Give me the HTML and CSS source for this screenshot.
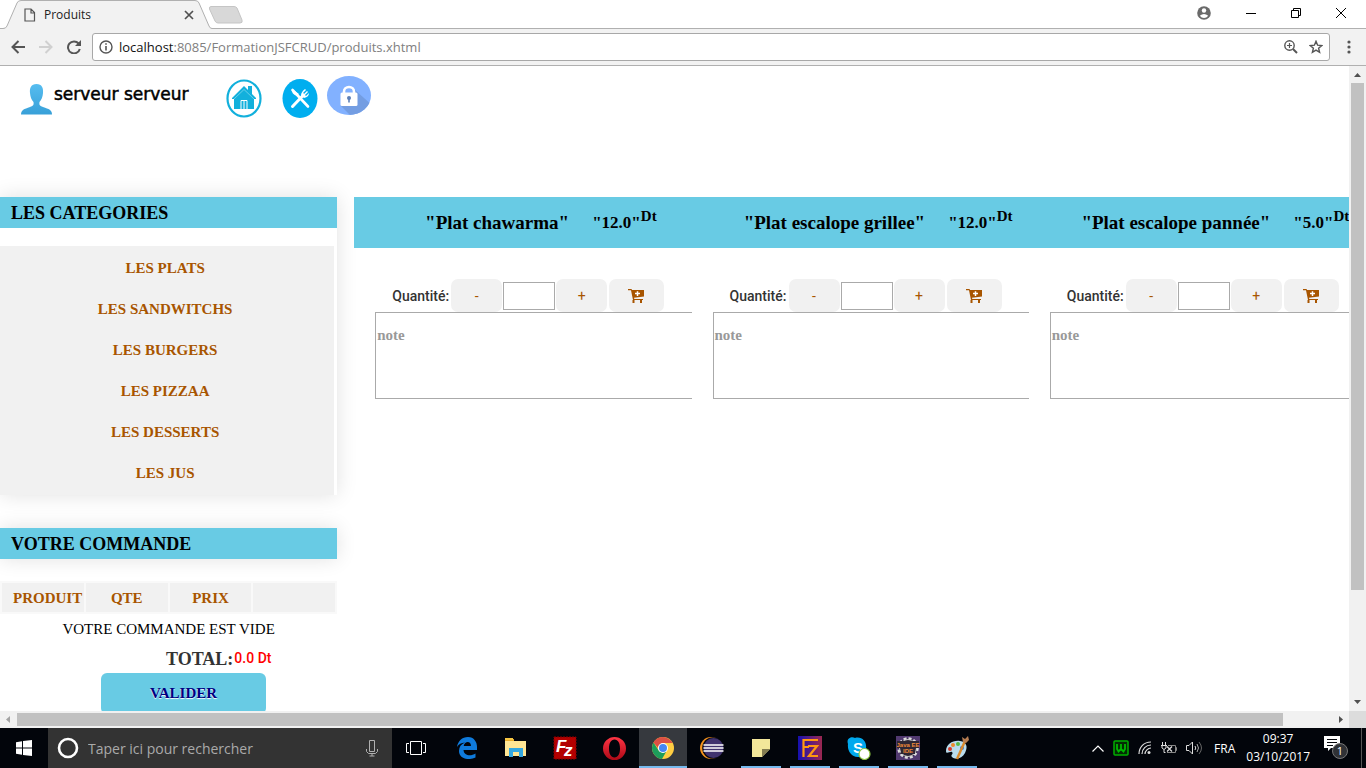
FILE: index.html
```html
<!DOCTYPE html>
<html lang="fr">
<head>
<meta charset="utf-8">
<title>Produits</title>
<link rel="stylesheet" href="styles.css">
</head>
<body>
<div class="tabstrip">
  <div class="tab">
    <svg class="tab-shape" width="212" height="29" viewBox="0 0 212 29"><path d="M0 28.500H3Q6 28.500 7 26L17 3Q18 .5 21 .5H195Q198 .5 199 3L209 26Q210 28.500 212 28.500V29H0Z" fill="#f2f2f2"/><path d="M0 28.500H3Q6 28.500 7 26L17 3Q18 .5 21 .5H195Q198 .5 199 3L209 26Q210 28.500 212 28.500" fill="none" stroke="#b0b0b0"/></svg>
    <div class="tab-body">
      <svg width="12" height="14" viewBox="0 0 12 14" fill="none" stroke="#555" stroke-width="1.200"><path d="M1 1H7L10.500 4.500V13H1ZM7 1V5H10.500"/></svg>
      <span class="tab-title">Produits</span>
      <button class="plain" aria-label="Fermer l'onglet"><svg width="10" height="10" viewBox="0 0 10 10" stroke="#505050" stroke-width="1.700"><path d="M1 1L9 9M9 1L1 9"/></svg></button>
    </div>
  </div>
  <button class="plain newtab" aria-label="Nouvel onglet"><svg width="36" height="18" viewBox="0 0 36 18"><path d="M3 .5H26Q28 .5 29 2L34 14Q35 17 32 17H10Q8 17 7 15L1.500 3Q1 .5 3 .5Z" fill="#d8d8d8" stroke="#c5c5c5"/></svg></button>
  <div class="window-controls">
    <button class="plain" aria-label="Profil"><svg width="14" height="14" viewBox="0 0 14 14"><circle cx="7" cy="7" r="6.800" fill="#6a6a6a"/><circle cx="7" cy="4.500" r="2.200" fill="#fff"/><path d="M2.800 9.800Q7 6.300 11.200 9.800Q9.500 12 7 12T2.800 9.800" fill="#fff"/></svg></button>
    <button class="plain" aria-label="Réduire"><svg width="10" height="10" viewBox="0 0 10 10"><path d="M0 5.500H10" stroke="#000"/></svg></button>
    <button class="plain" aria-label="Restaurer"><svg width="10" height="10" viewBox="0 0 10 10" fill="none" stroke="#000"><path d="M.5 2.500H7.500V9.500H.5ZM2.500 2.500V.5H9.500V7.500H7.500"/></svg></button>
    <button class="plain" aria-label="Fermer"><svg width="10" height="10" viewBox="0 0 10 10" stroke="#000"><path d="M0 0L10 10M10 0L0 10"/></svg></button>
  </div>
</div>
<div class="toolbar">
  <button class="plain tool" aria-label="Précédent"><svg width="14" height="14" viewBox="0 0 14 14" fill="none" stroke="#555" stroke-width="2"><path d="M14 7H1.500M7.500 1L1.500 7L7.500 13"/></svg></button>
  <button class="plain tool" aria-label="Suivant"><svg width="14" height="14" viewBox="0 0 14 14" fill="none" stroke="#d0d0d0" stroke-width="2"><path d="M0 7H12.500M6.500 1L12.500 7L6.500 13"/></svg></button>
  <button class="plain tool" aria-label="Actualiser"><svg width="14" height="14" viewBox="0 0 14 14"><path d="M11.600 3.500A6 6 0 1 0 12.800 9" fill="none" stroke="#555" stroke-width="2"/><path d="M14 0V6H8Z" fill="#555"/></svg></button>
  <div class="address">
    <svg width="14" height="14" viewBox="0 0 14 14"><circle cx="7" cy="7" r="6" fill="none" stroke="#555" stroke-width="1.400"/><path d="M7 6V10.500M7 3.200V4.800" stroke="#555" stroke-width="1.600"/></svg>
    <label for="url">localhost</label><input id="url" type="text" value=":8085/FormationJSFCRUD/produits.xhtml">
    <button class="plain" aria-label="Zoom"><svg width="14" height="14" viewBox="0 0 14 14" fill="none" stroke="#555"><circle cx="5.500" cy="5.500" r="4.700" stroke-width="1.400"/><path d="M9 9L13 13" stroke-width="2"/><path d="M3 5.500H8M5.500 3V8" stroke-width="1.200"/></svg></button>
    <button class="plain star" aria-label="Favori"><svg width="14" height="14" viewBox="0 0 14 14" fill="none" stroke="#555" stroke-width="1.400"><path d="M7 1.300L8.600 5.200L12.800 5.500L9.600 8.200L10.600 12.300L7 10.100L3.400 12.300L4.400 8.200L1.200 5.500L5.400 5.200Z"/></svg></button>
  </div>
  <button class="plain menu" aria-label="Menu"><svg width="4" height="14" viewBox="0 0 4 14" fill="#555"><circle cx="2" cy="2" r="1.600"/><circle cx="2" cy="7" r="1.600"/><circle cx="2" cy="12" r="1.600"/></svg></button>
</div>

<div class="viewport">
  <div class="page">
    <header class="site-header">
      <svg class="user-icon" width="31" height="31" viewBox="0 0 31 31"><defs><linearGradient id="user" x2="0" y2="1"><stop stop-color="#56bdf0"/><stop offset="1" stop-color="#38a0d8"/></linearGradient></defs><path fill="url(#user)" d="M15.500 0C10 0 8.500 4 9 9C9.300 13 10.500 16 12.500 18C13 21 12 22 9 23C3 25 0 26 0 30.500H31C31 26 28 25 22 23C19 22 18 21 18.500 18C20.500 16 21.700 13 22 9C22.500 4 21 0 15.500 0Z"/></svg>
      <span class="user-name">serveur serveur</span>
      <nav class="header-nav">
        <a class="nav-home" href="#accueil" aria-label="Accueil"><svg width="36" height="39" viewBox="0 0 36 39"><ellipse cx="18" cy="19.500" rx="16.500" ry="18" fill="#fff" stroke="#12b0dc" stroke-width="2.200"/><path fill="#12b0dc" d="M6 19L18 7L22 11V7H26V15L30 19V20H28V30H8V20H6Z"/><path d="M15 30V21.500H21V30M18 22V30" fill="none" stroke="#fff" stroke-width="1"/><path d="M8 20L18 10.500L28 20" fill="none" stroke="#8adcf0" stroke-width=".7"/></svg></a>
        <a class="nav-food" href="#plats" aria-label="Plats"><svg width="36" height="39" viewBox="0 0 36 39"><ellipse cx="18" cy="19.500" rx="17.500" ry="19.500" fill="#00aeef"/><path d="M10.500 11L26 27.500" stroke="#fff" stroke-width="2.600" stroke-linecap="round"/><path d="M10 10Q9 15 15 17L17 15Z" fill="#fff"/><path d="M10.500 27.500L21.500 16" stroke="#fff" stroke-width="3" stroke-linecap="round"/><path d="M19 16.500Q19 13 23 10L24 11L21 14L22 15L25 12L26 13L23 16L24 17L27 14Q27 18 22 19Z" fill="#fff"/></svg></a>
        <a class="nav-lock" href="#deconnexion" aria-label="Déconnexion"><svg width="44" height="40" viewBox="0 0 44 40"><defs><clipPath id="oval"><ellipse cx="22" cy="19.500" rx="22" ry="19.500"/></clipPath></defs><g clip-path="url(#oval)"><path fill="#82b1ff" d="M0 0H44V40H0Z"/><path fill="#739de2" d="M28 14L46 30V42H26L14 30Z"/></g><path d="M17 17V15.500A5 4.500 0 0 1 27 15.500V17" fill="none" stroke="#fff" stroke-width="2.600"/><rect x="13.500" y="16.500" width="17" height="13.500" rx="1.500" fill="#fff"/><path d="M22 21V26.500" stroke="#5b7fb8" stroke-width="1.600"/><circle cx="22" cy="22" r="2" fill="#5b7fb8"/></svg></a>
      </nav>
    </header>
    <div class="columns">
      <aside class="sidebar">
        <section class="panel">
          <h2 class="panel-title">LES CATEGORIES</h2>
          <nav class="categories">
            <a href="#plats">LES PLATS</a>
            <a href="#sandwitchs">LES SANDWITCHS</a>
            <a href="#burgers">LES BURGERS</a>
            <a href="#pizzaa">LES PIZZAA</a>
            <a href="#desserts">LES DESSERTS</a>
            <a href="#jus">LES JUS</a>
          </nav>
        </section>
        <section class="order">
          <h2 class="panel-title order-title">VOTRE COMMANDE</h2>
          <table class="order-table">
            <thead><tr><th class="first">PRODUIT</th><th>QTE</th><th>PRIX</th><th></th></tr></thead>
          </table>
          <p class="empty">VOTRE COMMANDE EST VIDE</p>
          <p class="total"><span class="total-label">TOTAL:</span><span class="total-value">0.0 Dt</span></p>
          <button class="validate">VALIDER</button>
        </section>
      </aside>
      <main class="products">
        <article class="product">
          <h3 class="product-title"><span>"Plat chawarma"</span><span class="price">"12.0"<sup>Dt</sup></span></h3>
          <div class="quantity"><label for="q1">Quantité:</label><button class="step">-</button><input id="q1" type="text"><button class="step">+</button><button class="cart" aria-label="Ajouter au panier"><svg width="17" height="14" viewBox="0 0 17 14"><path fill="#a85500" d="M0 0H3.500L4 1H16V7.500L6 8.700L6.300 10H15V11H5L3 1.300H0ZM4.500 11H6.500V14H4.500ZM12 11H14V14H12Z"/><path d="M9.500 2.200V7M7 4.600H12" stroke="#fff" stroke-width="1.500"/></svg></button></div>
          <textarea class="note" placeholder="note" aria-label="note"></textarea>
        </article>
        <article class="product">
          <h3 class="product-title"><span>"Plat escalope grillee"</span><span class="price">"12.0"<sup>Dt</sup></span></h3>
          <div class="quantity"><label for="q2">Quantité:</label><button class="step">-</button><input id="q2" type="text"><button class="step">+</button><button class="cart" aria-label="Ajouter au panier"><svg width="17" height="14" viewBox="0 0 17 14"><path fill="#a85500" d="M0 0H3.500L4 1H16V7.500L6 8.700L6.300 10H15V11H5L3 1.300H0ZM4.500 11H6.500V14H4.500ZM12 11H14V14H12Z"/><path d="M9.500 2.200V7M7 4.600H12" stroke="#fff" stroke-width="1.500"/></svg></button></div>
          <textarea class="note" placeholder="note" aria-label="note"></textarea>
        </article>
        <article class="product">
          <h3 class="product-title"><span>"Plat escalope pannée"</span><span class="price">"5.0"<sup>Dt</sup></span></h3>
          <div class="quantity"><label for="q3">Quantité:</label><button class="step">-</button><input id="q3" type="text"><button class="step">+</button><button class="cart" aria-label="Ajouter au panier"><svg width="17" height="14" viewBox="0 0 17 14"><path fill="#a85500" d="M0 0H3.500L4 1H16V7.500L6 8.700L6.300 10H15V11H5L3 1.300H0ZM4.500 11H6.500V14H4.500ZM12 11H14V14H12Z"/><path d="M9.500 2.200V7M7 4.600H12" stroke="#fff" stroke-width="1.500"/></svg></button></div>
          <textarea class="note" placeholder="note" aria-label="note"></textarea>
        </article>
      </main>
    </div>
  </div>
  <div class="vbar">
    <svg width="17" height="17" viewBox="0 0 17 17"><path fill="#505050" d="M5 11L8.500 7L12 11Z"/></svg>
    <div class="vtrack"><div class="vthumb"></div></div>
    <svg width="17" height="17" viewBox="0 0 17 17"><path fill="#505050" d="M5 6L8.500 10L12 6Z"/></svg>
  </div>
  <div class="hbar">
    <svg width="17" height="17" viewBox="0 0 17 17"><path fill="#a3a3a3" d="M10 5L6 8.500L10 12Z"/></svg>
    <div class="htrack"><div class="hthumb"></div></div>
    <svg width="17" height="17" viewBox="0 0 17 17"><path fill="#505050" d="M7 5L11 8.500L7 12Z"/></svg>
  </div>
  <div class="corner"></div>
</div>

<div class="taskbar">
  <button class="plain start" aria-label="Démarrer"><svg width="16" height="16" viewBox="0 0 16 16" fill="#fff"><path d="M0 2.200L6 1.300V7.500H0ZM7 1.100L16 0V7.500H7ZM0 8.500H6V14.700L0 13.800ZM7 8.500H16V16L7 14.900Z"/></svg></button>
  <div class="search">
    <svg width="22" height="22" viewBox="0 0 22 22"><circle cx="11" cy="11" r="9" fill="none" stroke="#fff" stroke-width="2.600"/></svg>
    <input type="text" placeholder="Taper ici pour rechercher" aria-label="Taper ici pour rechercher">
    <svg width="12" height="17" viewBox="0 0 12 17" fill="none" stroke="#b0b0b0"><path d="M3.500 .5H8.500V11.500H3.500ZM.5 9V11.500L2.500 13.500H9.500L11.500 11.500V9M6 13.500V16M3.500 16H8.500"/></svg>
  </div>
  <div class="apps">
    <button class="plain app" aria-label="Vue des tâches"><svg width="20" height="14" viewBox="0 0 20 14" fill="none" stroke="#fff"><path d="M4.500 .5H15.500V13.500H4.500ZM3 2.500H.5V11.500H3M17 2.500H19.500V11.500H17"/></svg></button>
    <button class="plain app" aria-label="Edge"><svg width="22" height="22" viewBox="0 0 22 22"><path fill="#0f7bdc" d="M1 10C2 4 6 0 12 0C18 0 21 5 21 10V13H7.500C8 19 15 19.500 19.500 16.500V20.500C12 24 3 21.500 3 14C3 10 5 7 9 5.500C5 6 3 7 1 10ZM7.700 9H15C15 3.500 8.500 4 7.700 9Z"/></svg></button>
    <button class="plain app" aria-label="Explorateur"><svg width="22" height="20" viewBox="0 0 22 20"><path d="M0 1H9V4H21V18H0Z" fill="#e9ad2b"/><path d="M0 3H21V18H0Z" fill="#ffe694"/><path d="M0 0H8V2H0Z" fill="#f6c644"/><path d="M4 19V10H18V19H14V14H8V19Z" fill="#34a8e0"/></svg></button>
    <button class="plain app" aria-label="FileZilla"><svg width="24" height="24" viewBox="0 0 24 24"><rect x="1" y="1" width="22" height="22" fill="#b30000" stroke="#8a0000" stroke-dasharray="2 1"/><text x="3" y="16" class="fz-text">F</text><text x="11" y="20" class="fz-text">z</text></svg></button>
    <button class="plain app" aria-label="Opera"><svg width="23" height="23" viewBox="0 0 23 23"><defs><linearGradient id="opera" x2="0" y2="1"><stop stop-color="#ff3545"/><stop offset="1" stop-color="#ad0916"/></linearGradient></defs><path fill="url(#opera)" fill-rule="evenodd" d="M11.500 0A11.500 11.500 0 1 0 11.500 23A11.500 11.500 0 1 0 11.500 0ZM11.500 2.500C15 2.500 17 6 17 11.500S15 20.500 11.500 20.500S6 17 6 11.500S8 2.500 11.500 2.500Z"/></svg></button>
    <button class="plain app active" aria-label="Chrome"><svg width="22" height="22" viewBox="0 0 22 22"><circle cx="11" cy="11" r="11" fill="#ffcd42"/><path fill="#dc5044" d="M11 11L1.500 5.500A11 11 0 0 1 20.500 6H11Z"/><path fill="#1d9d5b" d="M1.500 5.500L7 14L14 15L10 22A11 11 0 0 1 1.500 5.500Z"/><path fill="#dc5044" d="M1.500 5.500A11 11 0 0 1 20.500 6H11A5 5 0 0 0 6 11Z"/><circle cx="11" cy="11" r="5" fill="#fff"/><circle cx="11" cy="11" r="4" fill="#4586f3"/></svg></button>
    <button class="plain app" aria-label="Eclipse"><svg width="24" height="22" viewBox="0 0 24 22"><circle cx="11" cy="11" r="11" fill="#f7941e"/><circle cx="13" cy="11" r="10.800" fill="#080812"/><circle cx="13.500" cy="11" r="10" fill="#40336f"/><path d="M3.500 8H23.500M3.500 11H23.500M3.500 14H23.500" stroke="#fff" stroke-width="1.500"/></svg></button>
    <button class="plain app open" aria-label="Pense-bête"><svg width="18" height="18" viewBox="0 0 18 18"><path fill="#f3e79a" d="M0 0H18V10L10 18H0Z"/><path fill="#837c50" d="M10 18V10H18Z"/></svg></button>
    <button class="plain app open" aria-label="FileZilla Server"><svg width="24" height="24" viewBox="0 0 24 24"><defs><linearGradient id="fzs"><stop stop-color="#1510b0"/><stop offset="1" stop-color="#9c2850"/></linearGradient></defs><path fill="url(#fzs)" d="M0 0H24V24H0Z"/><path d="M5.500 21V4H20M5.500 11H11M10 10H19L11 20H20" fill="none" stroke="#ff980f" stroke-width="2.200"/></svg></button>
    <button class="plain app open" aria-label="Skype"><svg width="24" height="23" viewBox="0 0 24 23"><path fill="#00a9ee" d="M1 7C-1 2 4-1 8 1C15-1 20 5 19 11C23 16 18 23 12 20C5 21 0 14 1 7Z"/><text x="6" y="16" class="skype-text">S</text><circle cx="17.500" cy="17" r="5.500" fill="#fff" stroke="#8bc53f" stroke-width="1.200"/></svg></button>
    <button class="plain app open" aria-label="Java EE IDE"><svg width="24" height="24" viewBox="0 0 24 24"><path fill="#513a70" d="M0 0H24V24H0Z"/><circle cx="12" cy="12" r="9.500" fill="#2e2734" stroke="#ddd" stroke-width="2.500" stroke-dasharray="3 2"/><circle cx="12" cy="12" r="8.500" fill="none" stroke="#ccc"/><path fill="#2e2734" d="M1 5H23V12H19V18H5V12H1Z"/><text x="12" y="11" class="java-text">Java EE</text><text x="12" y="17" class="java-text">IDE</text></svg></button>
    <button class="plain app open" aria-label="Paint"><svg width="24" height="24" viewBox="0 0 24 24"><path fill="#b9dced" d="M1 15C1 8 8 4 15 5C22 6 23 11 20 17C17 23 10 24 7 21C5 19 9 18 7 16C5 15 1 19 1 15Z"/><circle cx="5" cy="13" r="2" fill="#d33b2c"/><circle cx="8" cy="9" r="2" fill="#ef8b2c"/><circle cx="13" cy="8" r="2" fill="#58b947"/><circle cx="17" cy="12" r="2" fill="#3978ce"/><path d="M12 23L20 5" stroke="#d98a2c" stroke-width="2.400"/><path d="M18 6L17 1L20 3L23 0L24 4L21 7Z" fill="#b77e52"/></svg></button>
  </div>
  <div class="tray">
    <svg width="12" height="7" viewBox="0 0 12 7" fill="none" stroke="#fff" stroke-width="1.200"><path d="M.5 6.500L6 1L11.500 6.500"/></svg>
    <svg width="16" height="16" viewBox="0 0 16 16"><rect x="1" y="1" width="14" height="14" rx="1" fill="#042b04" stroke="#00b000" stroke-width="1.500"/><path d="M4 4V9L5.500 11.500L8 9L10.500 11.500L12 9V4M8 4V9" fill="none" stroke="#00b800" stroke-width="1.800"/></svg>
    <svg width="14" height="14" viewBox="0 0 14 14" fill="none" stroke="#ddd" stroke-width="1.200"><path d="M1 13C1 6 6 1 13 1M4 13C4 8 8 4 13 4M7 13C7 10 10 7 13 7"/><circle cx="11" cy="11.500" r="1.500" fill="#ddd" stroke="none"/></svg>
    <svg width="16" height="13" viewBox="0 0 16 13" fill="none" stroke="#ddd"><path d="M1.500 0V3M4.500 0V3M0 3.500H6M1 4V6L3 7.500L5 6V4M3 7.500V10.500H4.500"/><path d="M7 3.500H14.500V10.500H6M14.500 5.500H15.500V8.500H14.500" stroke="#888"/><path d="M6 4.500L11 9.500M11 4.500L6 9.500" stroke-width="1.300"/></svg>
    <svg width="17" height="14" viewBox="0 0 17 14" fill="none" stroke="#ddd"><path d="M.5 4.500H3L6.500 1V13L3 9.500H.5Z"/><path d="M9 5Q10.500 7 9 9"/><path d="M11 3Q14 7 11 11" stroke="#aaa"/><path d="M13 1Q18 7 13 13" stroke="#666"/></svg>
    <span class="lang">FRA</span>
    <div class="clock"><span>09:37</span><span>03/10/2017</span></div>
    <button class="plain notif" aria-label="Notifications"><svg width="25" height="26" viewBox="0 0 25 26"><path fill="#fff" d="M0 1H16V13H7L4 16V13H0Z"/><path d="M3 4.500H13M3 7.500H13M3 10.500H9" stroke="#05070c"/><circle cx="16" cy="16" r="7.500" fill="#303236" stroke="#777"/><text x="16" y="20" class="badge-text">1</text></svg></button>
  </div>
</div>
</body>
</html>
```
FILE: styles.css
```css
* { box-sizing: border-box; }
body {
  margin: 0;
  height: 100vh;
  display: flex;
  flex-direction: column;
  overflow: hidden;
  background: #fff;
  font-family: "Liberation Serif", serif;
}
button, input, textarea { font: inherit; margin: 0; }
svg { display: block; flex: none; }
h2, h3, p { margin: 0; }
.plain { border: 0; padding: 0; background: none; display: flex; align-items: center; justify-content: center; }

/* Tab strip */
.tabstrip { height: 29px; flex: none; display: flex; border-bottom: 1px solid #b0b0b0; font-family: "Open Sans", sans-serif; }
.tab { display: grid; width: 212px; height: 29px; }
.tab > * { grid-area: 1 / 1; }
.tab-body { display: flex; align-items: center; padding: 0 18px 0 24px; z-index: 1; }
.tab-title { flex: 1; margin-left: 8px; font-size: 12px; color: #222; }
.newtab { height: 30px; margin-left: -4px; }
.window-controls { margin-left: auto; display: flex; align-items: center; gap: 35px; padding: 0 20px 2px 0; }

/* Toolbar */
.toolbar { height: 37px; flex: none; display: flex; align-items: center; background: #f2f2f2; border-bottom: 1px solid #b0b0b0; padding: 0 15px 0 11px; font-family: "Open Sans", sans-serif; }
.tool { width: 14px; margin-right: 14px; }
.tool:nth-child(3) { margin-right: 11px; }
.address { flex: 1; height: 28px; display: flex; align-items: center; background: #fff; border: 1px solid #a8a8a8; border-radius: 3px; padding: 0 6px; font-size: 13px; }
.address label { margin-left: 6px; color: #111; }
.address input { flex: 1; min-width: 0; border: 0; padding: 0; color: #808080; outline: 0; background: none; }
.star { margin-left: 11px; }
.menu { margin-left: 17px; }

/* Page viewport and scrollbars */
.viewport { flex: 1; min-height: 0; display: grid; grid-template: minmax(0, 1fr) 17px / minmax(0, 1fr) 17px; }
.page { overflow: hidden; }
.vbar, .hbar { background: #f1f1f1; display: flex; }
.vbar { flex-direction: column; }
.vtrack, .htrack { flex: 1; display: flex; }
.vthumb { width: 13px; height: 83%; margin: 0 auto; background: #c1c1c1; }
.htrack { align-items: center; }
.hthumb { height: 13px; width: calc(100% - 49px); background: #c1c1c1; }
.corner { background: #dcdcdc; }

/* Header */
.site-header { height: 131px; display: flex; align-items: flex-start; padding: 10px 0 0 21px; }
.user-icon { margin-top: 8px; }
.user-name { width: 172px; margin: 6px 0 0 2px; color: #000; font: 17px/24px "DejaVu Sans", sans-serif; -webkit-text-stroke: 0.5px #000; }
.header-nav { display: flex; align-items: flex-start; }
.nav-home, .nav-food { margin-top: 3px; }
.nav-food { margin-left: 20px; }
.nav-lock { margin-left: 9px; }

/* Sidebar */
.columns { display: flex; align-items: flex-start; }
.sidebar { width: 25%; flex: none; }
.panel { box-shadow: 0 0 20px rgba(0, 0, 0, .12); }
.panel-title { height: 31px; padding-left: 11px; background: #68cbe4; color: #000; font-size: 18px; line-height: 32px; }
.categories { margin: 18px 3px 0 0; padding: 2px 4px 1px 0; background: #f1f1f1; display: flex; flex-direction: column; }
.categories a { text-align: center; color: #a85500; font-size: 15px; font-weight: bold; line-height: 41px; text-decoration: none; }
.order { padding-top: 33px; }
.order-title { box-shadow: 0 0 20px rgba(0, 0, 0, .12); }
.order-table { width: 100%; margin-top: 22px; table-layout: fixed; border-collapse: separate; border-spacing: 2px; background: #f9f9f9; }
.order-table th { height: 29px; padding: 2px 0 0; background: #f1f1f1; color: #a85500; font-size: 15px; white-space: nowrap; overflow: hidden; }
.order-table .first { padding-left: 11px; text-align: left; }
.empty { font-size: 15px; line-height: 31px; text-align: center; color: #000; }
.total { display: flex; line-height: 28px; padding-left: 166px; color: #333; }
.total-label { font-size: 18px; font-weight: bold; }
.total-value { margin-left: 1px; color: #f00; font: 500 14px/26px Roboto, sans-serif; }
.validate { display: block; width: 165px; height: 41px; margin-left: 101px; border: 0; border-radius: 6px; background: #68cbe4; color: #000080; font-size: 15px; font-weight: bold; text-shadow: 0 1px 1px #fff; }

/* Products */
.products { width: 75%; flex: none; margin-left: 17px; display: grid; grid-template-columns: repeat(3, 1fr); }
.product { min-width: 0; overflow: hidden; }
.product-title { height: 51px; display: flex; justify-content: center; gap: 23px; padding-left: 36px; background: #68cbe4; color: #000; font-size: 19px; line-height: 51px; white-space: nowrap; }
.price { font-size: 17px; }
.price sup { font-size: 15px; line-height: 0; }
.quantity { display: flex; align-items: center; height: 33px; margin-top: 31px; padding-left: 38px; color: #333; font: 500 14px Roboto, sans-serif; }
.quantity label { width: 59px; }
.quantity input { width: 52px; height: 28px; margin: 0 1px; border: 1px solid #aaa; background: #fff; }
.step, .cart { height: 33px; padding: 0; border: 0; border-radius: 7px; background: #f1f1f1; color: #a85500; font-weight: 400; }
.step { width: 51px; }
.cart { width: 55px; margin-left: 2px; display: flex; align-items: center; justify-content: center; }
.note { display: block; width: 100%; height: 87px; margin-left: 21px; padding: 14px 1px; border: 1px solid #aaa; background: #fff; resize: none; font-size: 15px; font-weight: bold; }
.note::placeholder { color: #999; }

/* Taskbar */
.taskbar { height: 40px; flex: none; display: flex; background: #02050b; color: #fff; font-family: "Open Sans", sans-serif; }
.start { width: 48px; }
.search { width: 344px; display: flex; align-items: center; padding: 0 14px 0 9px; background: #333; }
.search input { flex: 1; min-width: 0; margin-left: 9px; padding: 0; border: 0; outline: 0; background: none; color: #fff; font-size: 14px; }
.search input::placeholder { color: #aaa; }
.apps { display: flex; gap: 1px; }
.app { width: 48px; height: 40px; background: linear-gradient(#76b9ed, #76b9ed) bottom / 0 2px no-repeat; }
.app:first-child { margin-right: 2px; }
.app.open { background-size: 40px 2px; }
.app.active { background-size: 48px 2px; background-color: #36393e; }
.tray { margin-left: auto; display: flex; align-items: center; gap: 9px; padding-right: 4px; font-size: 12px; }
.lang { margin-left: 2px; }
.clock { display: flex; flex-direction: column; align-items: center; line-height: 18px; margin-left: 2px; }
.notif { height: 40px; padding-right: 12px; margin-left: 5px; border-right: 1px solid #555; }
.fz-text { font: italic bold 17px "Liberation Sans", sans-serif; fill: #fff; }
.skype-text { font: bold 15px "Liberation Sans", sans-serif; fill: #fff; }
.java-text { font: bold 6px "Liberation Sans", sans-serif; fill: #ef8a38; text-anchor: middle; }
.badge-text { font: 11px "Open Sans", sans-serif; fill: #fff; text-anchor: middle; }
```
